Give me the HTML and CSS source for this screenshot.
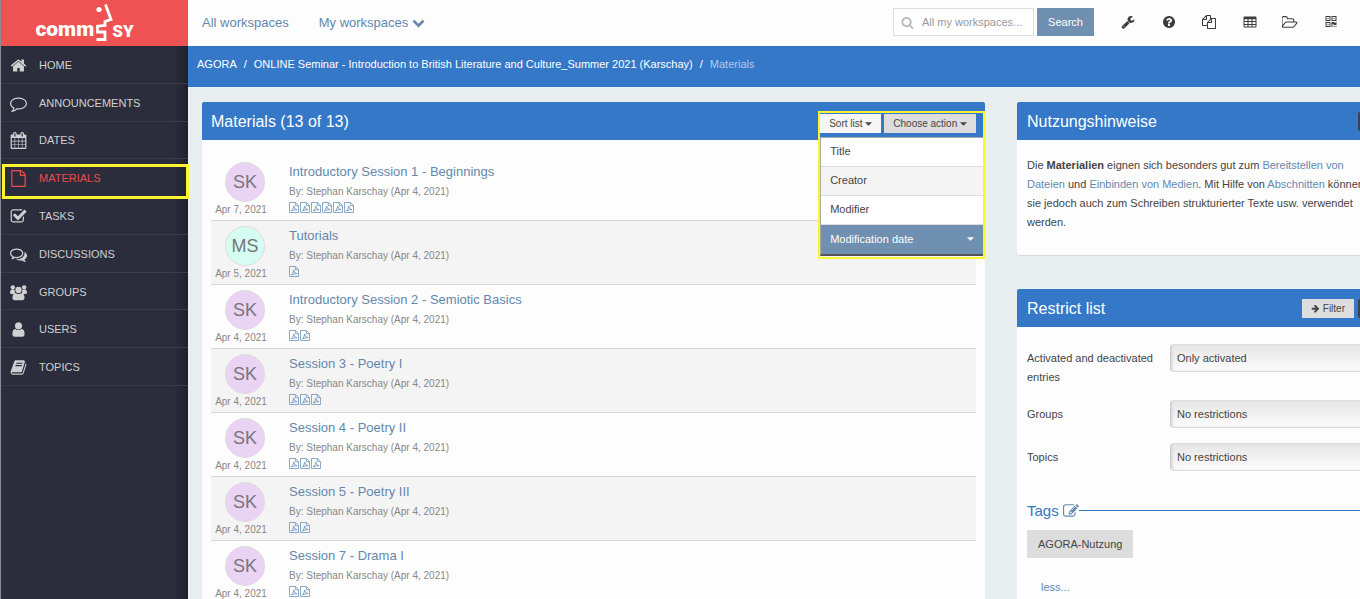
FILE: index.html
```html
<!DOCTYPE html>
<html lang="en">
<head>
<meta charset="utf-8">
<meta name="viewport" content="width=device-width, initial-scale=1">
<title>CommSy – Materials</title>
<link rel="stylesheet" href="styles.css">
</head>
<body>
<svg class="sprite" aria-hidden="true">
  <symbol id="i-home" viewBox="0 0 1792 1792"><path d="M1472 992v480q0 26-19 45t-45 19h-384v-384h-256v384h-384q-26 0-45-19t-19-45v-480q0-1 .5-3t.5-3l575-474 575 474q1 2 1 6zm223-69l-62 74q-8 9-21 11h-3q-13 0-21-7l-692-577-692 577q-12 8-24 7-13-2-21-11l-62-74q-8-10-7-23.5t11-21.5l719-599q32-26 76-26t76 26l244 204v-195q0-14 9-23t23-9h192q14 0 23 9t9 23v408l219 182q10 8 11 21.5t-7 23.5z"/></symbol>
  <symbol id="i-comment" viewBox="0 0 1792 1792"><path d="M896 384q-204 0-381.5 69.5t-282 187.5-104.5 255q0 112 71.5 213.5t201.5 175.5l87 50-27 96q-24 91-70 172 152-63 275-171l43-38 57 6q69 8 130 8 204 0 381.5-69.5t282-187.5 104.5-255-104.5-255-282-187.5-381.5-69.5zm896 512q0 174-120 321.5t-326 233-450 85.5q-70 0-145-8-198 175-460 242-49 14-114 22h-5q-15 0-27-10.5t-16-27.5v-1q-3-4-.5-12t2-10 4.5-9.5l6-9 7-8.5 8-9q7-8 31-34.5t34.5-38 31-39.5 32.5-51 27-59 26-76q-157-89-247.5-220t-90.5-281q0-174 120-321.5t326-233 450-85.5 450 85.5 326 233 120 321.5z"/></symbol>
  <symbol id="i-calendar" viewBox="0 0 1792 1792"><path d="M192 1664h288v-288h-288v288zm352 0h320v-288h-320v288zm-352-352h288v-320h-288v320zm352 0h320v-320h-320v320zm-352-384h288v-288h-288v288zm736 736h320v-288h-320v288zm-384-736h320v-288h-320v288zm768 736h288v-288h-288v288zm-384-352h320v-320h-320v320zm-352-864v-288q0-13-9.500-22.500t-22.500-9.500h-64q-13 0-22.500 9.500t-9.500 22.500v288q0 13 9.500 22.500t22.500 9.500h64q13 0 22.500-9.500t9.500-22.500zm736 864h288v-320h-288v320zm-384-384h320v-288h-320v288zm384 0h288v-288h-288v288zm32-480v-288q0-13-9.500-22.500t-22.500-9.500h-64q-13 0-22.500 9.500t-9.500 22.500v288q0 13 9.500 22.500t22.500 9.500h64q13 0 22.500-9.500t9.500-22.500zm384-64v1280q0 52-38 90t-90 38h-1408q-52 0-90-38t-38-90v-1280q0-52 38-90t90-38h128v-96q0-66 47-113t113-47h64q66 0 113 47t47 113v96h384v-96q0-66 47-113t113-47h64q66 0 113 47t47 113v96h128q52 0 90 38t38 90z"/></symbol>
  <symbol id="i-file" viewBox="0 0 1792 1792"><path d="M1596 380q28 28 48 76t20 88v1152q0 40-28 68t-68 28h-1344q-40 0-68-28t-28-68v-1600q0-40 28-68t68-28h896q40 0 88 20t76 48zm-444-244v376h376q-10-29-22-41l-313-313q-12-12-41-22zm384 1528v-1024h-416q-40 0-68-28t-28-68v-416h-768v1536h1280z"/></symbol>
  <symbol id="i-check" viewBox="0 0 1792 1792"><path d="M1472 930v318q0 119-84.500 203.500t-203.500 84.500h-832q-119 0-203.500-84.500t-84.500-203.500v-832q0-119 84.500-203.500t203.500-84.500h832q63 0 117 25 15 7 18 23 3 17-9 29l-49 49q-10 10-23 10-3 0-9-2-23-6-45-6h-832q-66 0-113 47t-47 113v832q0 66 47 113t113 47h832q66 0 113-47t47-113v-254q0-13 9-22l64-64q10-10 23-10 6 0 12 3 20 8 20 29zm231-489l-814 814q-24 24-57 24t-57-24l-430-430q-24-24-24-57t24-57l110-110q24-24 57-24t57 24l263 263 647-647q24-24 57-24t57 24l110 110q24 24 24 57t-24 57z"/></symbol>
  <symbol id="i-comments" viewBox="0 0 1792 1792"><path d="M704 384q-153 0-286 52t-211.500 141-78.500 191q0 82 53 158t149 132l97 56-35 84q34-20 62-39l44-31 53 10q78 14 153 14 153 0 286-52t211.500-141 78.500-191-78.500-191-211.500-141-286-52zm0-128q191 0 353.500 68.500t256.500 186.500 94 257-94 257-256.500 186.500-353.500 68.500q-86 0-176-16-124 88-278 128-36 9-86 16h-3q-11 0-20.500-8t-11.500-21q-1-3-1-6.500t.5-6.500 2-6l2.500-5 3.500-5.500 4-5 4.500-5 4-4.500q5-6 23-25t26-29.500 22.500-29 25-38.500 20.500-44q-124-72-195-177t-71-224q0-139 94-257t256.500-186.500 353.500-68.500zm822 1169q10 24 20.500 44t25 38.500 22.500 29 26 29.500 23 25q1 1 4 4.500t4.500 5 4 5 3.500 5.500l2.500 5 2 6 .5 6.500-1 6.500q-3 14-13 22t-22 7q-50-7-86-16-154-40-278-128-90 16-176 16-271 0-472-132 58 4 88 4 161 0 309-45t264-129q125-92 192-212t67-254q0-77-23-152 129 71 204 178t75 230q0 120-71 224.500t-195 176.500z"/></symbol>
  <symbol id="i-users" viewBox="0 0 18 17"><circle cx="3" cy="3" r="2.300"/><circle cx="15" cy="3" r="2.300"/><path d="M1.800 5.400h2.400l1 1q-.5 1.800.4 3L4.200 10H1Q0 9.800 0 8.600 0 6 1.800 5.400zM16.200 5.400h-2.400l-1 1q.5 1.800-.4 3l1.400.6H17q1-.2 1-1.400 0-2.600-1.800-3.200z"/><circle cx="9" cy="5.800" r="3.300"/><path d="M5.400 9q3.600 2.300 7.200 0 2.800.8 2.800 5.300 0 2.100-2 2.300H4.600q-2-.2-2-2.300Q2.600 9.800 5.400 9z"/></symbol>
  <symbol id="i-user" viewBox="0 0 1792 1792"><path d="M1536 1399q0 109-62.500 187t-150.500 78h-854q-88 0-150.500-78t-62.500-187q0-85 8.500-160.500t31.500-152 58.500-131 94-89 134.500-34.500q131 128 313 128t313-128q76 0 134.500 34.500t94 89 58.500 131 31.500 152 8.500 160.500zm-256-887q0 159-112.500 271.500t-271.500 112.500-271.500-112.500-112.500-271.500 112.500-271.500 271.500-112.500 271.500 112.500 112.500 271.500z"/></symbol>
  <symbol id="i-book" viewBox="0 0 1792 1792"><path d="M1703 478q40 57 18 129l-275 906q-19 64-76.500 107.500t-122.500 43.500h-923q-77 0-148.500-53.500t-99.500-131.500q-24-67-2-127 0-4 3-27t4-37q1-8-3-21.500t-3-19.500q2-11 8-21t16.500-23.500 16.500-23.500q23-38 45-91.500t30-91.500q3-10 .5-30t-.5-28q3-11 17-28t17-23q21-36 42-92t25-90q1-9-2.500-32t.5-28q4-13 22-30.500t22-22.500q19-26 42.500-84.500t27.500-96.500q1-8-3-25.500t-2-26.500q2-8 9-18t18-23 17-21q8-12 16.500-30.500t15-35 16-36 19.500-32 26.500-23.500 36-11.500 47.500 5.500l-1 3q38-9 51-9h761q74 0 114 56t18 130l-274 906q-36 119-71.500 153.500t-128.500 34.500h-869q-27 0-38 15-11 16-1 43 24 70 144 70h923q29 0 56-15.500t35-41.500l300-987q7-22 5-57 38 15 59 43zm-1064 2q-4 13 2 22.500t20 9.500h608q13 0 25.500-9.500t16.500-22.500l21-64q4-13-2-22.500t-20-9.500h-608q-13 0-25.500 9.500t-16.500 22.500zm-83 256q-4 13 2 22.500t20 9.500h608q13 0 25.500-9.500t16.500-22.500l21-64q4-13-2-22.500t-20-9.500h-608q-13 0-25.500 9.500t-16.500 22.500z"/></symbol>
  <symbol id="i-search" viewBox="0 0 1792 1792"><path d="M1216 832q0-185-131.500-316.500t-316.500-131.500-316.500 131.500-131.500 316.500 131.500 316.500 316.500 131.500 316.500-131.500 131.500-316.500zm512 832q0 52-38 90t-90 38q-54 0-90-38l-343-342q-179 124-399 124-143 0-273.500-55.500t-225-150-150-225-55.500-273.500 55.500-273.500 150-225 225-150 273.500-55.500 273.500 55.500 225 150 150 225 55.500 273.500q0 220-124 399l343 343q37 37 37 90z"/></symbol>
  <symbol id="i-wrench" viewBox="0 0 1792 1792"><path d="M448 1472q0-26-19-45t-45-19-45 19-19 45 19 45 45 19 45-19 19-45zm644-420l-682 682q-37 37-90 37-52 0-91-37l-106-108q-38-36-38-90 0-53 38-91l681-681q39 98 114.500 173.500t173.500 114.500zm634-435q0 39-23 106-47 134-164.500 217.500t-258.500 83.500q-185 0-316.500-131.500t-131.500-316.500 131.500-316.500 316.500-131.500q58 0 121.500 16.500t107.500 46.500q16 11 16 28t-16 28l-293 169v224l193 107q5-3 79-48.500t135.500-81 70.500-35.500q15 0 23.500 10t8.500 25z"/></symbol>
  <symbol id="i-help" viewBox="0 0 1792 1792"><path d="M1024 1376v-192q0-14-9-23t-23-9h-192q-14 0-23 9t-9 23v192q0 14 9 23t23 9h192q14 0 23-9t9-23zm256-672q0-88-55.500-163t-138.500-116-170-41q-243 0-371 213-15 24 8 42l132 100q7 6 19 6 16 0 25-12 53-68 86-92 34-24 86-24 48 0 85.500 26t37.500 59q0 38-20 61t-68 45q-63 28-115.500 86.500t-52.500 125.500v36q0 14 9 23t23 9h192q14 0 23-9t9-23q0-19 21.500-49.500t54.500-49.500q32-18 49-28.500t46-35 44.500-48 28-60.500 12.500-81zm384 192q0 209-103 385.500t-279.500 279.500-385.500 103-385.500-103-279.500-279.500-103-385.500 103-385.500 279.500-279.500 385.500-103 385.500 103 279.500 279.500 103 385.500z"/></symbol>
  <symbol id="i-copy" viewBox="0 0 1792 1792"><path d="M1696 384q40 0 68 28t28 68v1216q0 40-28 68t-68 28h-960q-40 0-68-28t-28-68v-288h-544q-40 0-68-28t-28-68v-672q0-40 20-88t48-76l408-408q28-28 76-48t88-20h416q40 0 68 28t28 68v328q68-40 128-40h416zm-544 213l-299 299h299v-299zm-640-384l-299 299h299v-299zm196 647l316-316v-416h-384v416q0 40-28 68t-68 28h-416v640h512v-256q0-40 20-88t48-76zm956 804v-1152h-384v416q0 40-28 68t-68 28h-416v640h896z"/></symbol>
  <symbol id="i-table" viewBox="0 0 14 14"><path fill-rule="evenodd" d="M1.700 1.500h10.600q1.200 0 1.200 1.200v8.600q0 1.200-1.200 1.200H1.700Q.5 12.500.5 11.300V2.700q0-1.200 1.200-1.200zM1.500 4.200v1.900h3V4.200zm4 0v1.900h3V4.200zm4 0v1.900h3V4.200zm-8 2.900v1.800h3V7.100zm4 0v1.800h3V7.100zm4 0v1.800h3V7.100zm-8 2.800v1.700h3V9.900zm4 0v1.700h3V9.900zm4 0v1.700h3V9.900z"/></symbol>
  <symbol id="i-folder" viewBox="0 0 1920 1792"><path d="M1717 931q0-35-53-35h-1088q-40 0-85.500 21.500t-71.500 52.500l-294 363q-18 24-18 40 0 35 53 35h1088q40 0 86-22t71-53l294-363q18-22 18-39zm-1141-163h768v-160q0-40-28-68t-68-28h-576q-40 0-68-28t-28-68v-64q0-40-28-68t-68-28h-320q-40 0-68 28t-28 68v853l256-315q44-53 116-87.500t140-34.500zm1269 163q0 62-46 120l-295 363q-43 53-116 87.500t-140 34.500h-1088q-92 0-158-66t-66-158v-960q0-92 66-158t158-66h320q92 0 158 66t66 158v32h544q92 0 158 66t66 158v160h192q54 0 99 24.500t67 70.500q15 32 15 68z"/></symbol>
  <symbol id="i-qr" viewBox="0 0 1792 1792"><path d="M576 1152v128h-128v-128h128zm0-768v128h-128v-128h128zm768 0v128h-128v-128h128zm-1024 1023h384v-383h-384v383zm0-767h384v-384h-384v384zm768 0h384v-384h-384v384zm-256 256v640h-640v-640h640zm512 512v128h-128v-128h128zm256 0v128h-128v-128h128zm0-512v384h-384v-128h-128v384h-128v-640h384v128h128v-128h128zm-768-768v640h-640v-640h640zm768 0v640h-640v-640h640z"/></symbol>
  <symbol id="i-down" viewBox="0 0 1792 1792"><path d="M1683 808l-742 741q-19 19-45 19t-45-19l-742-741q-19-19-19-45.500t19-45.500l166-165q19-19 45-19t45 19l531 531 531-531q19-19 45-19t45 19l166 165q19 19 19 45.500t-19 45.500z"/></symbol>
  <symbol id="i-right" viewBox="0 0 1792 1792"><path d="M1600 960q0 54-37 91l-651 651q-39 37-91 37-51 0-90-37l-75-75q-38-38-38-91t38-91l293-293h-704q-52 0-84.500-37.500t-32.500-90.500v-128q0-53 32.500-90.500t84.500-37.500h704l-293-294q-38-36-38-90t38-90l75-75q38-38 90-38 53 0 91 38l651 651q37 35 37 90z"/></symbol>
  <symbol id="i-edit" viewBox="0 0 1792 1792"><path d="M888 1184l116-116-152-152-116 116v56h96v96h56zm440-720q-16-16-33 1l-350 350q-17 17-1 33t33-1l350-350q17-17 1-33zm80 594v190q0 119-84.500 203.500t-203.500 84.500h-832q-119 0-203.500-84.500t-84.500-203.500v-832q0-119 84.500-203.500t203.500-84.500h832q63 0 117 25 15 7 18 23 3 17-9 29l-49 49q-14 14-32 8-23-6-45-6h-832q-66 0-113 47t-47 113v832q0 66 47 113t113 47h832q66 0 113-47t47-113v-126q0-13 9-22l64-64q15-15 35-7t20 29zm-96-738l288 288-672 672h-288v-288zm444 132l-92 92-288-288 92-92q28-28 68-28t68 28l152 152q28 28 28 68t-28 68z"/></symbol>
  <symbol id="i-pdf" viewBox="0 0 10 11"><path fill="none" stroke="currentColor" stroke-width=".8" d="M.5.5h6l3 3v7h-9zM6.300.5v3.200h3.200M2.300 9q2-1.300 2.400-5 .4 3.300 3.300 3.700-3-.2-5.700 1.300z"/></symbol>
  <symbol id="i-caret" viewBox="0 0 8 4"><path d="M0 0h8L4 4z"/></symbol>
</svg>

<div class="app">
  <aside class="sidebar">
    <a class="logo" href="#" aria-label="CommSy">
      <span class="logo-comm">comm</span>
      <svg class="logo-face" viewBox="0 0 17 40" aria-hidden="true"><circle cx="5" cy="7.500" r="2.600"/><path d="M11.500 2.500L17 17.500l-6 2V23.500l-7.500.7V30H11v7.500H2.500"/></svg>
      <span class="logo-sy">SY</span>
    </a>
    <nav class="menu" aria-label="Sections">
      <a class="menu-item" href="#"><svg><use href="#i-home"/></svg>HOME</a>
      <a class="menu-item" href="#"><svg><use href="#i-comment"/></svg>ANNOUNCEMENTS</a>
      <a class="menu-item" href="#"><svg><use href="#i-calendar"/></svg>DATES</a>
      <a class="menu-item is-active" href="#" aria-current="page"><svg><use href="#i-file"/></svg>MATERIALS</a>
      <a class="menu-item" href="#"><svg><use href="#i-check"/></svg>TASKS</a>
      <a class="menu-item" href="#"><svg><use href="#i-comments"/></svg>DISCUSSIONS</a>
      <a class="menu-item" href="#"><svg><use href="#i-users"/></svg>GROUPS</a>
      <a class="menu-item" href="#"><svg><use href="#i-user"/></svg>USERS</a>
      <a class="menu-item" href="#"><svg><use href="#i-book"/></svg>TOPICS</a>
    </nav>
  </aside>

  <div class="page">
    <header class="topbar">
      <nav class="spaces" aria-label="Workspaces">
        <a href="#">All workspaces</a>
        <a href="#">My workspaces <svg><use href="#i-down"/></svg></a>
      </nav>
      <form class="search">
        <label class="search-box"><svg><use href="#i-search"/></svg><input type="text" placeholder="All my workspaces..." aria-label="Search all my workspaces"></label>
        <button class="search-btn" type="button">Search</button>
      </form>
      <nav class="tools" aria-label="Tools">
        <a href="#" aria-label="Settings"><svg><use href="#i-wrench"/></svg></a>
        <a href="#" aria-label="Help"><svg><use href="#i-help"/></svg></a>
        <a href="#" aria-label="Clipboard"><svg><use href="#i-copy"/></svg></a>
        <a href="#" aria-label="Calendar"><svg><use href="#i-table"/></svg></a>
        <a href="#" aria-label="Portfolio"><svg class="wide"><use href="#i-folder"/></svg></a>
        <a href="#" aria-label="Widgets"><svg><use href="#i-qr"/></svg></a>
      </nav>
    </header>

    <nav class="crumbs" aria-label="Breadcrumb">
      <a href="#">AGORA</a><span>/</span><a href="#">ONLINE Seminar - Introduction to British Literature and Culture_Summer 2021 (Karschay)</a><span>/</span><span class="crumb-here">Materials</span>
    </nav>

    <div class="content">
      <main class="card">
        <div class="card-head">
          <h1>Materials (13 of 13)</h1>
          <div class="actions">
            <button class="btn btn-open" type="button">Sort list <svg class="caret"><use href="#i-caret"/></svg></button>
            <button class="btn" type="button">Choose action <svg class="caret"><use href="#i-caret"/></svg></button>
            <div class="sort-menu">
              <button type="button">Title</button>
              <button type="button">Creator</button>
              <button type="button">Modifier</button>
              <button class="is-chosen" type="button">Modification date <svg class="caret"><use href="#i-caret"/></svg></button>
            </div>
          </div>
        </div>
        <div class="list">
          <article class="row">
            <div class="who"><span class="avatar">SK</span><time>Apr 7, 2021</time></div>
            <div class="what"><h2><a href="#">Introductory Session 1 - Beginnings</a></h2><p>By: Stephan Karschay (Apr 4, 2021)</p>
              <div class="files"><svg><use href="#i-pdf"/></svg><svg><use href="#i-pdf"/></svg><svg><use href="#i-pdf"/></svg><svg><use href="#i-pdf"/></svg><svg><use href="#i-pdf"/></svg><svg><use href="#i-pdf"/></svg></div></div>
          </article>
          <article class="row">
            <div class="who"><span class="avatar avatar-mint">MS</span><time>Apr 5, 2021</time></div>
            <div class="what"><h2><a href="#">Tutorials</a></h2><p>By: Stephan Karschay (Apr 4, 2021)</p>
              <div class="files"><svg><use href="#i-pdf"/></svg></div></div>
          </article>
          <article class="row">
            <div class="who"><span class="avatar">SK</span><time>Apr 4, 2021</time></div>
            <div class="what"><h2><a href="#">Introductory Session 2 - Semiotic Basics</a></h2><p>By: Stephan Karschay (Apr 4, 2021)</p>
              <div class="files"><svg><use href="#i-pdf"/></svg><svg><use href="#i-pdf"/></svg></div></div>
          </article>
          <article class="row">
            <div class="who"><span class="avatar">SK</span><time>Apr 4, 2021</time></div>
            <div class="what"><h2><a href="#">Session 3 - Poetry I</a></h2><p>By: Stephan Karschay (Apr 4, 2021)</p>
              <div class="files"><svg><use href="#i-pdf"/></svg><svg><use href="#i-pdf"/></svg><svg><use href="#i-pdf"/></svg></div></div>
          </article>
          <article class="row">
            <div class="who"><span class="avatar">SK</span><time>Apr 4, 2021</time></div>
            <div class="what"><h2><a href="#">Session 4 - Poetry II</a></h2><p>By: Stephan Karschay (Apr 4, 2021)</p>
              <div class="files"><svg><use href="#i-pdf"/></svg><svg><use href="#i-pdf"/></svg><svg><use href="#i-pdf"/></svg></div></div>
          </article>
          <article class="row">
            <div class="who"><span class="avatar">SK</span><time>Apr 4, 2021</time></div>
            <div class="what"><h2><a href="#">Session 5 - Poetry III</a></h2><p>By: Stephan Karschay (Apr 4, 2021)</p>
              <div class="files"><svg><use href="#i-pdf"/></svg><svg><use href="#i-pdf"/></svg></div></div>
          </article>
          <article class="row">
            <div class="who"><span class="avatar">SK</span><time>Apr 4, 2021</time></div>
            <div class="what"><h2><a href="#">Session 7 - Drama I</a></h2><p>By: Stephan Karschay (Apr 4, 2021)</p>
              <div class="files"><svg><use href="#i-pdf"/></svg><svg><use href="#i-pdf"/></svg></div></div>
          </article>
        </div>
      </main>

      <aside class="side">
        <section class="card">
          <div class="card-head"><h2>Nutzungshinweise</h2><button class="btn btn-dark" type="button" aria-label="Collapse"></button></div>
          <p class="hint">Die <b>Materialien</b> eignen sich besonders gut zum <a href="#">Bereitstellen von Dateien</a> und <a href="#">Einbinden von Medien</a>. Mit Hilfe von <a href="#">Abschnitten</a> können sie jedoch auch zum Schreiben strukturierter Texte usw. verwendet werden.</p>
        </section>
        <section class="card card-grow">
          <div class="card-head"><h2>Restrict list</h2><button class="btn" type="button"><svg><use href="#i-right"/></svg> Filter</button><button class="btn btn-dark" type="button" aria-label="Collapse"></button></div>
          <form class="filters">
            <label for="f-act">Activated and deactivated entries</label>
            <select id="f-act"><option>Only activated</option></select>
            <label for="f-grp">Groups</label>
            <select id="f-grp"><option>No restrictions</option></select>
            <label for="f-top">Topics</label>
            <select id="f-top"><option>No restrictions</option></select>
          </form>
          <div class="tags">
            <h3>Tags <a href="#" aria-label="Edit tags"><svg><use href="#i-edit"/></svg></a></h3>
            <button class="tag" type="button">AGORA-Nutzung</button>
            <a class="less" href="#">less...</a>
          </div>
        </section>
      </aside>
    </div>
  </div>
</div>
</body>
</html>
```
FILE: styles.css
```css
* { box-sizing: border-box; }

body {
  margin: 0;
  font: 11px/19px "Liberation Sans", Arial, sans-serif;
  color: #444;
  background: #e9eef0;
}

a { color: #6488ad; text-decoration: none; }
h1, h2, h3, p { margin: 0; font-weight: normal; }
button, input, select { font: inherit; color: inherit; border: 0; border-radius: 0; padding: 0; }
svg { fill: currentColor; flex: none; }
.sprite { position: absolute; width: 0; height: 0; }

.app {
  display: grid;
  grid-template-columns: 188px minmax(0, 1fr);
  height: 100vh;
  overflow: hidden;
}

/* Sidebar */
.sidebar {
  background: linear-gradient(to left, #1f202c, #2b2d3c 14px);
  border-left: 1px solid #8b8c94;
}
.logo {
  display: flex;
  justify-content: center;
  height: 46px;
  padding-right: 20px;
  background: #ee5253;
  color: #fff;
  font-family: Roboto, sans-serif;
  font-weight: 900;
}
.logo-comm { font-size: 21px; line-height: 59px; }
.logo-face { width: 17px; height: 40px; margin: 2px 1px 0 0; overflow: visible; }
.logo-face path { fill: none; stroke: #fff; stroke-width: 2.8; }
.logo-sy { font-size: 17px; line-height: 62px; }

.menu {
  display: grid;
  grid-auto-rows: 1fr;
  height: 340px;
}
.menu-item {
  position: relative;
  display: flex;
  align-items: center;
  gap: 12px;
  padding: 2px 0 0 9px;
  color: #d0d0d2;
  border-bottom: 1px solid #3a3c4c;
}
.menu-item svg { width: 17px; height: 17px; }
.menu-item.is-active { color: #ea4b4f; }
.menu-item.is-active::after {
  content: "";
  position: absolute;
  inset: 5px -1px -3px 1px;
  border: 3px solid #fcf431;
}

/* Top bar */
.page { display: flex; flex-direction: column; min-width: 0; }
.topbar {
  display: flex;
  align-items: center;
  height: 46px;
  padding: 0 21px 2px 14px;
  background: #fdfdfd;
}
.spaces { display: flex; gap: 30px; margin-right: auto; font-size: 13px; }
.spaces svg { width: 13px; height: 13px; vertical-align: -2px; }
.search { display: flex; gap: 3px; }
.search-box {
  display: flex;
  align-items: center;
  gap: 8px;
  width: 141px;
  height: 28px;
  padding: 0 7px;
  border: 1px solid #ddd;
  background: #fff;
  color: #bbb;
}
.search-box svg { width: 13px; height: 13px; }
.search-box input { min-width: 0; flex: 1; background: none; outline: 0; }
.search-box input::placeholder { color: #999; opacity: 1; }
.search-btn { width: 57px; background: #6f90b0; color: #fff; }
.tools { display: flex; justify-content: space-between; width: 219px; margin-left: 26px; }
.tools a { display: flex; justify-content: center; width: 16px; color: #3c3c3c; }
.tools svg { width: 14px; height: 14px; }
.tools .wide { width: 16px; height: 15px; }

.crumbs {
  display: flex;
  gap: 7px;
  height: 41px;
  padding: 9px 9px 0;
  background: #3478c7;
  color: #fff;
  white-space: nowrap;
}
.crumbs a { color: #fff; }
.crumbs .crumb-here { color: #b3cbe8; }

/* Cards; the side column runs past the right edge of the window */
.content {
  display: grid;
  grid-template-columns: minmax(0, 1fr) 372px;
  gap: 32px;
  flex: 1;
  margin-right: -29px;
  padding: 15px 0 0 14px;
}
.card { background: #fdfdfd; border-radius: 2px; box-shadow: 0 1px 1px #d5dadc; }
.card-head {
  display: flex;
  align-items: center;
  gap: 4px;
  min-height: 38px;
  padding: 0 9px;
  background: #3478c7;
  border-radius: 2px 2px 0 0;
}
.card-head h1, .card-head h2 { margin-right: auto; font-size: 16px; color: #fff; }

.btn {
  height: 19px;
  padding: 0 9px;
  background: #ddd;
  color: #444;
  font-size: 10px;
  line-height: 19px;
  white-space: nowrap;
}
.btn svg { width: 9px; height: 9px; vertical-align: -1px; }
.btn .caret, .sort-menu .caret { width: 7px; height: 4px; vertical-align: 1px; }
.btn-open { background: #f7f7f7; }
.btn-dark { width: 22px; background: #3a4450; border-radius: 2px; }

.actions { position: relative; display: flex; gap: 3px; padding-top: 4px; }
.actions::after {
  content: "";
  position: absolute;
  inset: 1px -9px -126px -2px;
  border: 2px solid #fcf431;
  pointer-events: none;
}
.sort-menu {
  position: absolute;
  top: 27px;
  left: 0;
  right: -8px;
  display: flex;
  flex-direction: column;
  background: #fff;
  border: 1px solid #aaa;
  border-bottom: 2px solid #555;
}
.sort-menu button {
  display: flex;
  align-items: center;
  justify-content: space-between;
  height: 29px;
  padding: 0 9px;
  background: #fff;
  border-bottom: 1px solid #ddd;
}
.sort-menu button:nth-child(2) { background: #f4f4f4; }
.sort-menu .is-chosen { background: #6f90b0; color: #fff; border-bottom: 0; }

/* Material list */
.list { padding: 16px 9px 0; }
.row {
  display: grid;
  grid-template-columns: 60px 1fr;
  gap: 18px;
  height: 64px;
  padding-top: 5px;
  border-bottom: 1px solid #d8d8d8;
}
.row:nth-child(even) { background: #f4f4f4; }
.row:first-child { height: 65px; padding-top: 6px; }
.who { display: flex; flex-direction: column; align-items: center; font-size: 10px; line-height: 15px; color: #888; }
.avatar {
  width: 40px;
  height: 40px;
  margin-left: 8px;
  border: 1px solid #ddd;
  border-radius: 50%;
  background: #ead3f5;
  color: #777;
  font-size: 18px;
  line-height: 38px;
  text-align: center;
}
.avatar-mint { background: #d5fdf2; }
.what h2 { font-size: 13px; line-height: 20px; }
.what p { font-size: 10px; line-height: 20px; color: #888; }
.files { display: flex; gap: 1px; color: #6f93b8; }
.files svg { width: 10px; height: 11px; }

/* Side column */
.side { display: flex; flex-direction: column; gap: 34px; }
.card-grow { flex: 1; }
.side .card-head { padding-left: 10px; }
.hint { padding: 16px 16px 23px 10px; }
.filters {
  display: grid;
  grid-template-columns: 134px 1fr;
  column-gap: 9px;
  align-items: start;
  padding: 17px 9px 0 10px;
}
.filters label { padding: 5px 0 14px; }
.filters label:first-child { padding-bottom: 13px; }
.filters select {
  height: 28px;
  padding: 0 6px;
  border: 1px solid #ddd;
  border-left-color: #ccc;
  border-radius: 4px;
  background: linear-gradient(#e6e6e6, #fcfcfc);
  box-shadow: inset 2px 0 2px #ddd;
  appearance: none;
}
.filters label + select + label { padding-top: 5px; padding-bottom: 19px; }
.tags { display: flex; flex-direction: column; align-items: flex-start; gap: 10px; padding: 15px 0 0 10px; }
.tags h3 { display: flex; align-items: center; gap: 4px; align-self: stretch; font-size: 15px; color: #3478c7; }
.tags h3 a { display: flex; }
.tags h3 svg { width: 16px; height: 16px; }
.tags h3::after { content: ""; flex: 1; height: 1px; margin-left: -4px; background: #3478c7; }
.tag { height: 28px; padding: 0 11px; background: #ddd; color: #444; }
.less { margin: 10px 0 0 14px; }
```
